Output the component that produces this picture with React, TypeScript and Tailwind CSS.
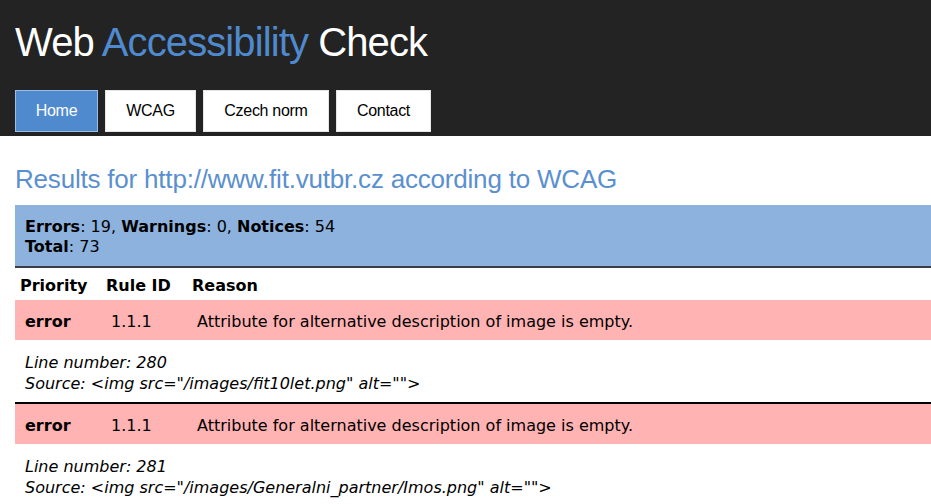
const body = { fontFamily: '"DejaVu Sans", Verdana, sans-serif' };

function NavButton({ label, width, active = false }: { label: string; width: string; active?: boolean }) {
  return (
    <a
      href="#"
      className={
        (active
          ? 'border-[#9dbde6] bg-[#4f8acf] text-white '
          : 'border-[#e5e5e5] bg-white text-black ') +
        'block border py-[11px] text-center text-[16px] leading-[18px] tracking-[-0.3px] ' +
        width
      }
    >
      {label}
    </a>
  );
}

function ErrorItem({ line, source }: { line: number; source: string }) {
  return (
    <>
      <div className="grid h-[40px] grid-cols-[86px_86px_1fr] items-center bg-[#ffb3b3] pt-[3px] pl-[10px] text-[16px] text-black">
        <span className="font-bold">error</span>
        <span>1.1.1</span>
        <span>Attribute for alternative description of image is empty.</span>
      </div>
      <div className="px-[10px] pt-[12px] pb-[8px] text-[16px] leading-[21px] italic text-black">
        <div>Line number: {line}</div>
        <div>Source: {source}</div>
      </div>
    </>
  );
}

export default function App() {
  return (
    <div className="min-h-[504px] bg-white">
      <header
        className="bg-[#232323] px-[15px] pt-[19px] pb-[4px]"
        style={{ fontFamily: '"Liberation Sans", Arial, sans-serif' }}
      >
        <h1 className="text-[40px] leading-[46px] tracking-[-0.9px] text-white">
          Web <span className="text-[#4f8acf]">Accessibility</span> Check
        </h1>
        <nav className="mt-[25px] flex gap-[7px]">
          <NavButton label="Home" width="w-[83px]" active />
          <NavButton label="WCAG" width="w-[91px]" />
          <NavButton label="Czech norm" width="w-[126px]" />
          <NavButton label="Contact" width="w-[95px]" />
        </nav>
      </header>

      <main className="pl-[15px]">
        <h2
          className="mt-[28px] text-[26px] leading-[30px] tracking-[-0.2px] text-[#5a8fd0]"
          style={{ fontFamily: '"Liberation Sans", Arial, sans-serif' }}
        >
          Results for http://www.fit.vutbr.cz according to WCAG
        </h2>

        <div style={body}>
          <div className="mt-[11px] border-b-2 border-[#3a3f47] bg-[#8cb2dd] px-[10px] pt-[12px] pb-[9px] text-[16px] leading-[20px] text-black">
            <div>
              <b>Errors</b>: 19, <b>Warnings</b>: 0, <b>Notices</b>: 54
            </div>
            <div>
              <b>Total</b>: 73
            </div>
          </div>

          <div className="grid h-[32px] grid-cols-[86px_86px_1fr] items-center pt-[3px] pl-[5px] text-[16px] font-bold text-black">
            <span>Priority</span>
            <span>Rule ID</span>
            <span>Reason</span>
          </div>

          <ErrorItem line={280} source={'<img src="/images/fit10let.png" alt="">'} />
          <div className="border-t-2 border-black">
            <ErrorItem line={281} source={'<img src="/images/Generalni_partner/Imos.png" alt="">'} />
          </div>
        </div>
      </main>
    </div>
  );
}
